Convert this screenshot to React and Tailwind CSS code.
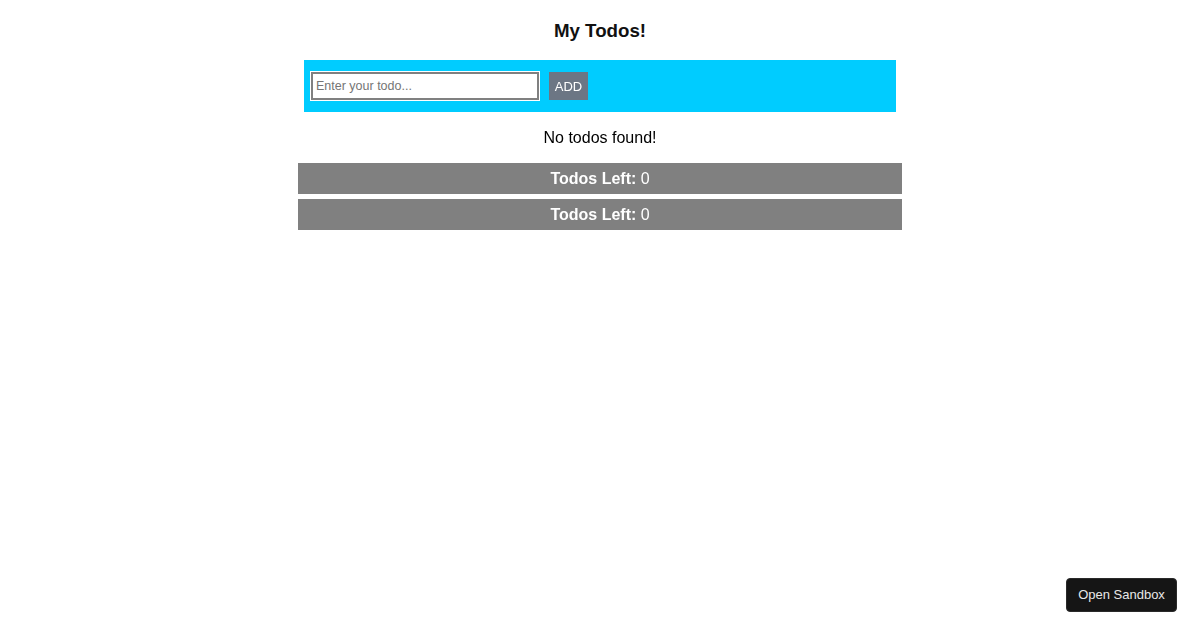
import React from "react";

export default function App() {
  return (
    <div className="min-h-[630px] w-full bg-white" style={{ fontFamily: '"Liberation Sans", Arial, sans-serif' }}>
      <div className="mx-auto w-[604px] flex flex-col">
        <h3 className="mt-[20px] mb-[18px] text-center text-[18.72px] leading-[22px] font-bold text-[#111]">My Todos!</h3>
        <div className="mx-[6px] h-[52px] bg-[#00ccff] flex items-center px-[7px] gap-[10px]">
          <input
            autoFocus
            type="text"
            placeholder="Enter your todo..."
            className="w-[228px] h-[28px] border-2 border-[#808080] outline outline-1 outline-white bg-white px-[3px] text-[12.5px] text-black placeholder:text-[#757575] focus:outline-white"
            style={{ fontFamily: '"Liberation Sans", Arial, sans-serif' }}
          />
          <button className="h-[28px] w-[39px] bg-[#6c7684] text-white text-[13px] pt-[1px] flex items-center justify-center">ADD</button>
        </div>
        <p className="mt-[17px] mb-[16px] text-center text-[16px] leading-[18px] text-black">No todos found!</p>
        <div className="flex flex-col gap-[5px]">
          <div className="h-[31px] bg-[#808080] flex items-center justify-center text-white text-[16px]">
            <span className="font-bold">Todos Left:</span>
            <span>&nbsp;0</span>
          </div>
          <div className="h-[31px] bg-[#808080] flex items-center justify-center text-white text-[16px]">
            <span className="font-bold">Todos Left:</span>
            <span>&nbsp;0</span>
          </div>
        </div>
      </div>
      <button className="fixed right-[23px] bottom-[18px] w-[111px] h-[34px] rounded-[4px] bg-[#151515] border border-[#2a2a2a] text-[#e8e8e8] text-[13px] flex items-center justify-center">
        Open Sandbox
      </button>
    </div>
  );
}
